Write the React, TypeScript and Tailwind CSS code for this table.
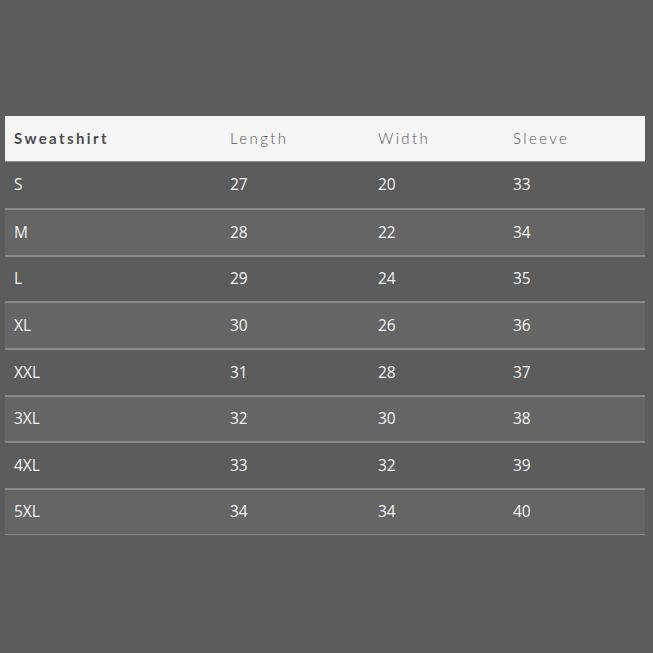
import React from "react";

const rows = [
  ["S", "27", "20", "33"],
  ["M", "28", "22", "34"],
  ["L", "29", "24", "35"],
  ["XL", "30", "26", "36"],
  ["XXL", "31", "28", "37"],
  ["3XL", "32", "30", "38"],
  ["4XL", "33", "32", "39"],
  ["5XL", "34", "34", "40"],
];

export default function App() {
  return (
    <div className="h-[653px] w-[653px] bg-[#5c5c5c] pt-[116px] pl-[5px] pr-[8px]">
      <div className="w-[640px]">
        <div
          className="grid h-[46px] grid-cols-[216px_148px_135px_132px] items-center bg-[#f5f5f5] border-b border-[#8f8f8f] pl-[9px] text-[15px] tracking-[2.4px] text-[#555]"
          style={{ fontFamily: "Lato, 'Open Sans', sans-serif" }}
        >
          <div className="font-bold text-[#4c4c4c]">Sweatshirt</div>
          <div className="font-light">Length</div>
          <div className="font-light">Width</div>
          <div className="font-light">Sleeve</div>
        </div>
        {rows.map((r, i) => (
          <div
            key={r[0]}
            className={
              "grid grid-cols-[216px_148px_135px_132px] items-center pl-[9px] text-[15.5px] text-[#f2f2f2] box-border " +
              (i === 0 ? "h-[46px] " : "h-[46.7px] border-t-2 border-[#8a8a8a] ") +
              (i % 2 === 1 ? "bg-[#656565] " : "bg-[#5c5c5c] ") +
              (i === rows.length - 1 ? "border-b border-b-[#8a8a8a]" : "")
            }
            style={{ fontFamily: "'Open Sans', sans-serif" }}
          >
            {r.map((c, j) => (
              <div key={j}>{c}</div>
            ))}
          </div>
        ))}
      </div>
    </div>
  );
}
